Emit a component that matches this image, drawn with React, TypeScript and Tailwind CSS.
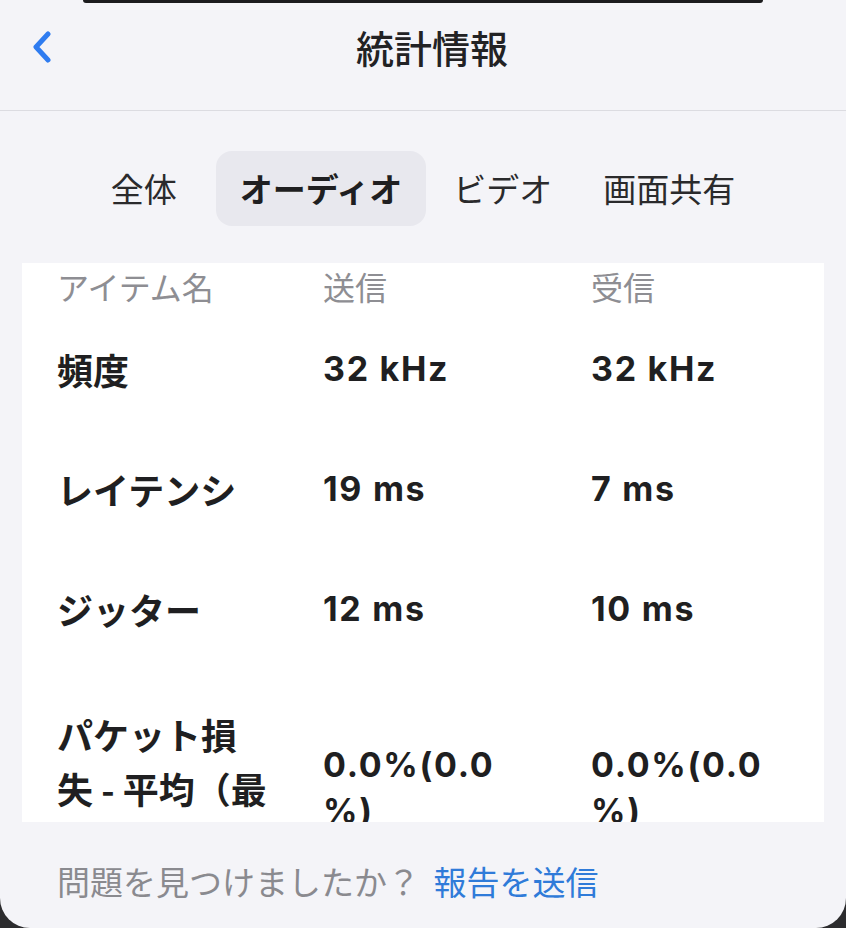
import { Fragment } from 'react';

const tabs = [
  { label: '全体', active: false },
  { label: 'オーディオ', active: true },
  { label: 'ビデオ', active: false },
  { label: '画面共有', active: false },
];

// last row runs past the bottom of the scroll area, so it is cut like in the app
const rows = [
  { name: ['頻度'], send: ['32 kHz'], recv: ['32 kHz'], pad: 'py-[33px]', label: 'items-center' },
  { name: ['レイテンシ'], send: ['19 ms'], recv: ['7 ms'], pad: 'py-[33px]', label: 'items-center' },
  { name: ['ジッター'], send: ['12 ms'], recv: ['10 ms'], pad: 'py-[33px]', label: 'items-center' },
  {
    name: ['パケット損', '失 - 平均（最'],
    send: ['0.0%(0.0', '%)'],
    recv: ['0.0%(0.0', '%)'],
    pad: 'pt-[38px] pb-[33px]',
    label: 'items-start h-[233px]',
  },
];

const jp = "font-['Noto_Sans_CJK_JP',sans-serif]";
const num = "font-['Inter','Noto_Sans_CJK_JP',sans-serif]";

function Lines({ items }: { items: string[] }) {
  return (
    <>
      {items.map((t, i) => (
        <Fragment key={i}>
          {i > 0 && <br />}
          {t}
        </Fragment>
      ))}
    </>
  );
}

export default function App() {
  return (
    <div className="w-[846px] h-[928px] bg-[#2c2c2e]">
      <div className={`h-full bg-[#f4f4f8] rounded-b-[30px] flex flex-col overflow-hidden ${jp}`}>
        {/* notch edge */}
        <div className="flex justify-center">
          <div className="w-[680px] h-[3px] bg-[#1c1c1e] rounded-b-[10px]" />
        </div>

        {/* nav bar */}
        <div className="h-[108px] border-b border-[#dcdce1] grid grid-cols-[1fr_auto_1fr] items-center pb-[20px] px-[32px]">
          <svg width="20" height="32" viewBox="0 0 20 32" fill="none">
            <path d="M16 3 L4 16 L16 29" stroke="#2f7cf0" strokeWidth="5" strokeLinecap="round" strokeLinejoin="round" />
          </svg>
          <h1 className="pl-[18px] text-[38px] leading-none font-medium text-[#222224]">統計情報</h1>
          <div />
        </div>

        {/* tabs */}
        <div className="mt-[40px] flex justify-center gap-[3px]">
          {tabs.map((tab, i) => (
            <div
              key={tab.label}
              className={`h-[75px] px-6 flex items-center rounded-[16px] text-[33px] leading-none ${i === 0 ? 'mr-[12px]' : ''} ${
                tab.active ? 'bg-[#e8e8ee] font-bold text-[#1f1f21]' : 'text-[#2a2a2c]'
              }`}
            >
              {tab.label}
            </div>
          ))}
        </div>

        {/* stats table */}
        <div className="mt-[37px] mx-[22px] h-[559px] bg-white overflow-hidden pl-[35px]">
          <div className="grid grid-cols-[266px_268px_1fr]">
            <div className="h-[46px] text-[32px] leading-[46px] text-[#8e8e93]">アイテム名</div>
            <div className="h-[46px] text-[32px] leading-[46px] text-[#8e8e93]">送信</div>
            <div className="h-[46px] text-[32px] leading-[46px] text-[#8e8e93]">受信</div>
            {rows.map((row) => (
              <Fragment key={row.name.join('')}>
                <div className={`${row.pad} ${row.label} flex text-[36px] leading-[54px] font-bold text-[#1f1f21]`}>
                  <div>
                    <Lines items={row.name} />
                  </div>
                </div>
                <div className={`${row.pad} flex items-center text-[34px] leading-[46px] font-bold tracking-[0.05em] text-[#1f1f21] ${num}`}>
                  <div>
                    <Lines items={row.send} />
                  </div>
                </div>
                <div className={`${row.pad} flex items-center text-[34px] leading-[46px] font-bold tracking-[0.05em] text-[#1f1f21] ${num}`}>
                  <div>
                    <Lines items={row.recv} />
                  </div>
                </div>
              </Fragment>
            ))}
          </div>
        </div>

        {/* footer */}
        <div className="mt-[39px] px-[57px] text-[33px] leading-[40px] text-[#8a8a8f]">
          問題を見つけましたか？ <span className="ml-[6px] text-[#2f7bd9]">報告を送信</span>
        </div>
      </div>
    </div>
  );
}
